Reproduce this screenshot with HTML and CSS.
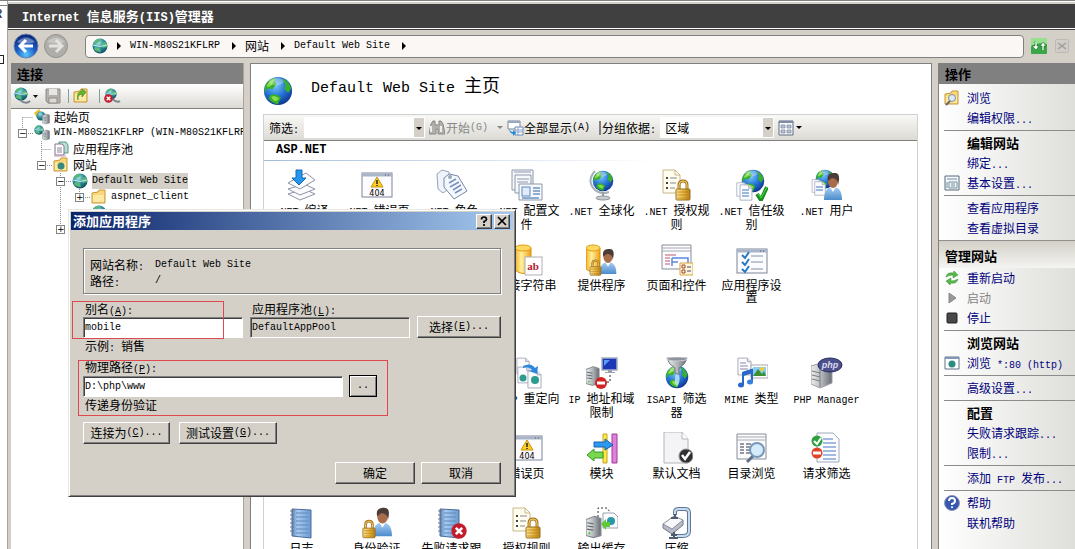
FILE: index.html
```html
<!DOCTYPE html>
<html lang="zh-CN">
<head>
<meta charset="utf-8">
<title>Internet 信息服务(IIS)管理器</title>
<link rel="stylesheet" href="styles.css">
</head>
<body>
<svg class="sprite" aria-hidden="true">
  <defs>
    <radialGradient id="sea" cx=".4" cy=".3" r=".75"><stop offset="0" stop-color="#7cc8f8"/><stop offset=".5" stop-color="#2878d8"/><stop offset="1" stop-color="#0c2f8c"/></radialGradient>
    <radialGradient id="teal" cx=".4" cy=".3" r=".75"><stop offset="0" stop-color="#a8e4e8"/><stop offset=".5" stop-color="#2c8a9c"/><stop offset="1" stop-color="#0c4c60"/></radialGradient>
    <linearGradient id="gold"><stop offset="0" stop-color="#fce49c"/><stop offset=".5" stop-color="#eab83c"/><stop offset="1" stop-color="#b8801c"/></linearGradient>
    <linearGradient id="cyl"><stop offset="0" stop-color="#f8b020"/><stop offset=".4" stop-color="#fff0a0"/><stop offset="1" stop-color="#f0a010"/></linearGradient>
    <linearGradient id="steel"><stop offset="0" stop-color="#f0f0f0"/><stop offset=".5" stop-color="#b4b8bc"/><stop offset="1" stop-color="#686c74"/></linearGradient>
    <linearGradient id="shirt" x2="0" y2="1"><stop offset="0" stop-color="#a8d0f4"/><stop offset="1" stop-color="#4c8ccc"/></linearGradient>
    <linearGradient id="book"><stop offset="0" stop-color="#5c84b8"/><stop offset=".3" stop-color="#a8ccf0"/><stop offset="1" stop-color="#6898d0"/></linearGradient>
    <radialGradient id="ball" cx=".5" cy=".85" r=".8"><stop offset="0" stop-color="#58c8ff"/><stop offset=".5" stop-color="#1c5cc8"/><stop offset="1" stop-color="#0c2878"/></radialGradient>
  </defs>
</svg>
<svg class="symbols" aria-hidden="true">
  <symbol id="globe" viewBox="0 0 32 32"><circle cx="16" cy="16" r="15" fill="url(#sea)"/><path d="M3 9Q7 2 14 2L12 6 15 8 10 14 5 13 2 18Q1 13 3 9M20 3Q28 5 30 13L27 18 23 14 24 9M8 20Q14 18 19 23L16 30Q9 29 6 24Z" fill="#38b028"/><path d="M4 10Q8 4 13 3L9 10 5 12M9 22Q13 20 17 24L14 27Q10 26 9 22" fill="#88dc50"/><ellipse cx="14" cy="6" rx="8" ry="4" fill="#fff" opacity=".3"/></symbol>
  <symbol id="globe-s" viewBox="0 0 16 16"><circle cx="8" cy="8" r="7.5" fill="url(#teal)"/><path d="M2 4Q5 0 9 1L7 4 3 6M9 5L14 4 15 9 11 10M3 9L8 10 9 14Q4 14 2 11Z" fill="#58b878"/><path d="M1 7Q8 10 15 7" stroke="#bde8ee" fill="none"/></symbol>
  <symbol id="page" viewBox="0 0 16 20"><path d="M1 1H11L15 5V19H1Z" fill="#fcfcff" stroke="#a4a8b8"/><path d="M11 1V5H15" fill="#dde" stroke="#a4a8b8"/></symbol>
  <symbol id="lock" viewBox="0 0 16 22"><path d="M4 12V6Q4 2 8 2T12 6V12" fill="none" stroke="#a87820" stroke-width="3"/><path d="M4 12V6Q4 2 8 2T12 6V12" fill="none" stroke="#f0d070"/><rect x="1" y="10" width="14" height="11" rx="1" fill="url(#gold)" stroke="#98701c"/><path d="M2 13H14M2 16H14M2 19H14" stroke="#a87418" opacity=".6"/></symbol>
  <symbol id="man" viewBox="0 0 20 28"><path d="M1 27Q1 14 10 14T19 27Z" fill="url(#shirt)"/><path d="M7 14L10 19 13 14" fill="#fff"/><ellipse cx="10" cy="8" rx="5" ry="7" fill="#a86c48"/><path d="M5 8Q3 1 10 0T16 7L15 13Q16 6 9 5Z" fill="#4c3c38"/></symbol>
  <symbol id="server" viewBox="0 0 16 22"><path d="M1 4L9 1 15 3V19L8 21 1 19Z" fill="url(#steel)" stroke="#80848c"/><path d="M2 7L8 8M2 10L8 11M2 13L8 14" stroke="#606468"/><circle cx="4" cy="17" r="1" fill="#4c4"/></symbol>
  <symbol id="win" viewBox="0 0 32 26"><rect x="1" y="1" width="30" height="24" fill="#fcfcff" stroke="#7c8498"/><path d="M1 3H31" stroke="#aab4c8" stroke-width="3"/><path d="M24 3H25M27 3H28" stroke="#556"/></symbol>
  <symbol id="folder" viewBox="0 0 16 16"><path d="M1 4L7 3 8 1H14V14H1Z" fill="#f8d878" stroke="#c89838"/><path d="M2 6H13V13H2Z" fill="#fce9a4"/></symbol>
  <symbol id="err" viewBox="0 0 10 10"><circle cx="5" cy="5" r="4.8" fill="#c41c2c"/><path d="M3 3L7 7M7 3L3 7" stroke="#fff" stroke-width="1.6"/></symbol>

  <symbol id="i-compile" viewBox="0 0 32 32"><g fill="#fcfcff" stroke="#8c94a8"><path d="M2 25L18 20 29 25 14 31Z"/><path d="M2 20L18 15 29 20 14 26Z"/><path d="M2 14L20 4 29 11 14 20Z"/></g><path d="M10 1H16V9H20L13 16 6 9H10Z" fill="#2498ec" stroke="#1468b8"/></symbol>
  <symbol id="i-404" viewBox="0 0 32 32"><use href="#win" x="0" y="3" width="32" height="26"/><path d="M16 8L22 18H10Z" fill="#fcd020" stroke="#c89410"/><path d="M16 11V15M16 16V17" stroke="#222" stroke-width="1.5"/><text x="16" y="27" text-anchor="middle" class="i404">404</text></symbol>
  <symbol id="i-role" viewBox="0 0 32 32"><path d="M1 5L6 1 13 3 15 18 7 24 2 20Z" fill="#f0f4fc" stroke="#98a4b8"/><path d="M8 9L13 5 22 7 31 22 18 30 8 18Z" fill="#f4f8ff" stroke="#7888a4"/><path d="M13 14L20 10M14 18L23 13M17 21L25 16M19 24L26 20" stroke="#7890b8" stroke-width="1.5"/><circle cx="14" cy="8" r="2" fill="#9ab"/></symbol>
  <symbol id="i-config" viewBox="0 0 32 32"><g fill="#f6f8fc" stroke="#8c98ac"><path d="M1 1H22V21H1Z"/><path d="M4 6H20V24H4Z"/><path d="M8 15H31V31H8Z"/></g><path d="M3 3H20M6 10H18M6 13H17" stroke="#8c98ac"/><rect x="11" y="18" width="8" height="9" fill="#dfeafa" stroke="#5c88bc"/><path d="M22 19H29M22 22H29M22 25H29M11 29H28" stroke="#8cacd0" stroke-width="2"/></symbol>
  <symbol id="i-world" viewBox="0 0 32 32"><path d="M9 2Q0 12 9 21Q15 26 23 23" fill="none" stroke="#a8b0b8" stroke-width="2"/><use href="#globe" x="6" y="1" width="22" height="22"/><path d="M17 23V28" stroke="#98a0a8" stroke-width="2"/><ellipse cx="17" cy="29" rx="7" ry="2" fill="#c8ccd0" stroke="#909498"/></symbol>
  <symbol id="i-auth" viewBox="0 0 32 32"><path d="M2 1H14L19 6V24H2Z" fill="#fffcf0" stroke="#c8b888"/><path d="M14 1V6H19" fill="none" stroke="#c8b888"/><path d="M5 9H7M5 14H7M5 19H7" stroke="#444" stroke-width="2"/><path d="M9 9H16M9 14H15M9 19H14" stroke="#888"/><use href="#lock" x="14" y="10" width="16" height="22"/></symbol>
  <symbol id="i-trust" viewBox="0 0 32 32"><use href="#globe" x="5" y="0" width="24" height="24"/><use href="#page" x="0" y="13" width="12" height="15"/><use href="#page" x="3" y="15" width="14" height="17"/><path d="M6 21H13M6 24H13M6 27H13" stroke="#3878c0"/><path d="M21 25L25 31 31 18" fill="none" stroke="#189020" stroke-width="4"/><path d="M22 25L25 29 31 18" fill="none" stroke="#50d848"/></symbol>
  <symbol id="i-users" viewBox="0 0 32 32"><use href="#globe" x="4" y="0" width="20" height="20"/><use href="#page" x="0" y="10" width="12" height="14"/><use href="#page" x="3" y="12" width="12" height="15"/><path d="M5 18H12M5 21H12" stroke="#3878c0"/><use href="#man" x="12" y="4" width="20" height="28"/></symbol>
  <symbol id="i-conn" viewBox="0 0 32 32"><path d="M4 4V26Q12 33 20 26V4Z" fill="url(#cyl)" stroke="#d89410"/><ellipse cx="12" cy="4" rx="8" ry="3" fill="#ffd860" stroke="#e09c18"/><rect x="14" y="13" width="17" height="18" fill="#fff" stroke="#b0b0b8"/><text x="22" y="26" text-anchor="middle" class="iab">ab</text></symbol>
  <symbol id="i-provider" viewBox="0 0 32 32"><path d="M0 4V25Q7 31 14 25V4Z" fill="url(#cyl)" stroke="#d89410"/><ellipse cx="7" cy="4" rx="7" ry="3" fill="#ffd860" stroke="#e09c18"/><use href="#man" x="12" y="5" width="20" height="26"/><use href="#lock" x="3" y="15" width="13" height="17"/></symbol>
  <symbol id="i-controls" viewBox="0 0 32 32"><path d="M1 1H30V25H1Z" fill="#fcfcff" stroke="#888c98"/><path d="M1 4H30M1 7H30" stroke="#a4a8b0"/><path d="M4 11H15M4 14H9M4 17H9M4 20H9" stroke="#c05870"/><path d="M11 14H27V21M11 14V22M11 18H17" stroke="#5888e0" stroke-width="1.5" fill="none"/><path d="M19 19H32V31H19Z" fill="#fff8d8" stroke="#d8a440"/><path d="M21 21H24V24H21ZM21 26H24V29H21Z" fill="none" stroke="#a04030"/><path d="M26 23H30M26 27H30" stroke="#447"/></symbol>
  <symbol id="i-appset" viewBox="0 0 32 32"><use href="#win" x="0" y="4" width="32" height="26"/><path d="M6 11L9 14 13 8M6 18L9 21 13 15M6 25L9 28 13 22" fill="none" stroke="#2878c0" stroke-width="2"/><path d="M15 12H27M15 18H27M15 25H27" stroke="#8090a4"/></symbol>
  <symbol id="i-redirect" viewBox="0 0 32 32"><use href="#page" x="5" y="0" width="14" height="18"/><use href="#page" x="6" y="9" width="14" height="18"/><circle cx="12" cy="21" r="3.5" fill="#2c9c90"/><use href="#page" x="16" y="13" width="15" height="19"/><circle cx="24" cy="23" r="4" fill="#2c9c90"/><path d="M12 9Q20 5 24 11L27 9 26 17 18 14 21 13Q18 9 12 11Z" fill="#2c88dc"/></symbol>
  <symbol id="i-ip" viewBox="0 0 32 32"><use href="#server" x="-1" y="8" width="15" height="22"/><rect x="16" y="1" width="15" height="12" fill="#1838b8" stroke="#a8b0c0" stroke-width="1.5"/><path d="M18 3H24L18 9Z" fill="#5c9cf8"/><path d="M22 13H26V15H29V16H19V15H22Z" fill="#98a0b0"/><path d="M24 18V25H20" stroke="#222" stroke-dasharray="2" fill="none"/><circle cx="15" cy="26" r="6" fill="#d02424"/><path d="M11 26H19" stroke="#fff" stroke-width="3"/></symbol>
  <symbol id="i-isapi" viewBox="0 0 32 32"><use href="#globe" x="4" y="8" width="24" height="24"/><path d="M6 1H26Q25 7 18 11V18L14 16V11Q7 7 6 1Z" fill="url(#steel)" stroke="#707880"/><ellipse cx="16" cy="2" rx="10" ry="2" fill="#8c949c" stroke="#c8ccd0"/><path d="M15 17Q12 24 16 30Q20 24 18 18Z" fill="#c4e8ff" opacity=".8"/></symbol>
  <symbol id="i-mime" viewBox="0 0 32 32"><use href="#page" x="1" y="0" width="15" height="19"/><path d="M4 6H10M4 9H12M4 12H12" stroke="#88a"/><rect x="15" y="8" width="17" height="13" fill="#fff" stroke="#a8a8b0"/><path d="M17 10H30V19H17Z" fill="#88ccf0"/><path d="M17 19L22 12 26 17 28 14 30 19Z" fill="#3c9030"/><circle cx="26" cy="12" r="2" fill="#f8cc20"/><path d="M7 28V16L16 13V25" fill="none" stroke="#2868c8" stroke-width="2"/><path d="M7 17L16 14" stroke="#2868c8" stroke-width="4"/><ellipse cx="5" cy="28" rx="3" ry="2.5" fill="#2868c8"/><ellipse cx="14" cy="25" rx="3" ry="2.5" fill="#3880e0"/></symbol>
  <symbol id="i-php" viewBox="0 0 32 32"><path d="M0 9L13 5 21 8V26L9 31 0 27Z" fill="url(#steel)" stroke="#a0a0a4"/><path d="M1 14L9 16M1 18L9 20M1 22L9 24M9 12V30" stroke="#787c80"/><ellipse cx="19" cy="8" rx="12" ry="7" fill="#4c508c" stroke="#282c5c"/><text x="19" y="11" text-anchor="middle" class="iphp">php</text></symbol>
  <symbol id="i-module" viewBox="0 0 32 32"><path d="M17 2H21V31H17Z" fill="#fcec40" stroke="#c8a020"/><path d="M26 2H31V31H26Z" fill="#e080dc" stroke="#9c3c98"/><path d="M8 10H19V7L27 13 19 18V15H8Z" fill="#2c98f0" stroke="#1860b0"/><path d="M17 20H8V17L1 23 8 29V26H17Z" fill="#78d850" stroke="#389828"/></symbol>
  <symbol id="i-doc" viewBox="0 0 32 32"><path d="M3 0H21L27 7V31H3Z" fill="#f4f4f6" stroke="#b4b4bc"/><path d="M21 0V7H27" fill="#fff" stroke="#b4b4bc"/><circle cx="25" cy="24" r="7" fill="#303034" stroke="#909094"/><path d="M21 23L24 27 29 20" fill="none" stroke="#fff" stroke-width="2.5"/></symbol>
  <symbol id="i-browse" viewBox="0 0 32 32"><path d="M1 2H30V27H1Z" fill="#fcfcff" stroke="#888c98"/><path d="M1 5H30M1 8H30" stroke="#a4a8b0"/><path d="M4 12H8M4 15H8M4 18H8M4 21H8M10 12H15M10 15H14M10 18H14M10 21H15" stroke="#334"/><path d="M17 24L11 30" stroke="#607080" stroke-width="3"/><circle cx="21" cy="18" r="7" fill="#cce8fc" fill-opacity=".85" stroke="#7898b8" stroke-width="2"/></symbol>
  <symbol id="i-filter" viewBox="0 0 32 32"><path d="M6 1H22L28 7V30H6Z" fill="#fcfcff" stroke="#a0a8b8"/><path d="M12 7H22M12 11H25M12 15H25M12 19H25M12 23H25M12 27H25" stroke="#4878c0"/><circle cx="6" cy="9" r="5.5" fill="#30a040"/><path d="M3 9L6 12 10 6" fill="none" stroke="#fff" stroke-width="2"/><circle cx="6" cy="21" r="5.5" fill="#e04428"/><path d="M2 21H10" stroke="#fff" stroke-width="3"/></symbol>
  <symbol id="i-log" viewBox="0 0 32 32"><path d="M6 2L25 3V31L6 29Z" fill="url(#book)" stroke="#4c6c98"/><path d="M10 6H22M10 10H22M10 14H22M10 18H22M10 22H22M10 26H22" stroke="#6088b8"/><path d="M4 4H8M4 8H8M4 12H8M4 16H8M4 20H8M4 24H8" stroke="#707888"/></symbol>
  <symbol id="i-ident" viewBox="0 0 32 32"><use href="#man" x="11" y="0" width="21" height="31"/><use href="#lock" x="1" y="12" width="14" height="20"/></symbol>
  <symbol id="i-fail" viewBox="0 0 32 32"><use href="#i-log" x="-2" y="0" width="32" height="32"/><use href="#err" x="15" y="16" width="16" height="16"/></symbol>
  <symbol id="i-cache" viewBox="0 0 32 32"><use href="#server" x="-1" y="8" width="17" height="24"/><path d="M12 10V1H21L24 5V12" fill="#fff" stroke="#333" stroke-dasharray="2"/><path d="M17 6H28L32 10V21H17Z" fill="#fcfcff" stroke="#98a0b0"/><circle cx="25" cy="14" r="4" fill="#2898a8"/><path d="M15 17L20 12V15H24V20H20V23Z" fill="#60c838"/></symbol>
  <symbol id="i-zip" viewBox="0 0 32 32"><path d="M14 8V5Q14 2 18 2H24Q28 2 28 6V24Q28 29 22 29H16" fill="none" stroke="#607898" stroke-width="4"/><path d="M14 8V5Q14 2 18 2H24Q28 2 28 6V24Q28 29 22 29H16" fill="none" stroke="#c8dcf0" stroke-width="2"/><path d="M2 17V21L11 27 22 18V13Z" fill="#b8bcc8" stroke="#707884"/><path d="M2 17L13 9 22 13 11 22Z" fill="#f8f8fc" stroke="#88909c"/><path d="M10 11H17M14 7V11M13 25V31M8 31H17M10 28H16" stroke="#505c70" stroke-width="2"/></symbol>
</svg>

<div class="desktop">
  <aside class="behind"><span class="m">R</span><i></i></aside>
  <div class="window">
    <header class="caption"><h1><span class="m">Internet </span>信息服务<span class="m">(IIS)</span>管理器</h1></header>
    <nav class="navbar">
      <button class="plain" aria-label="后退"><svg width="26" height="26" viewBox="0 0 26 26"><circle cx="13" cy="13" r="12" fill="url(#ball)" stroke="#6c84b0"/><path d="M4 9Q13 0 22 9Q13 12 4 9" fill="#fff" opacity=".35"/><path d="M13 7L7 13 13 19M8 13H20" fill="none" stroke="#fff" stroke-width="3"/></svg></button>
      <button class="plain fwd" aria-label="前进"><svg width="26" height="26" viewBox="0 0 26 26"><circle cx="13" cy="13" r="11.500" fill="#b0aeaa" stroke="#94928e"/><path d="M4 9Q13 0 22 9Q13 12 4 9" fill="#fff" opacity=".3"/><path d="M13 7L19 13 13 19M18 13H6" fill="none" stroke="#e4e2de" stroke-width="3"/></svg></button>
      <div class="address">
        <svg width="16" height="16"><use href="#globe-s"/></svg>
        <i class="tri"></i><span class="m">WIN-M80S21KFLRP</span>
        <i class="tri"></i><span>网站</span>
        <i class="tri"></i><span class="m">Default Web Site</span>
        <i class="tri"></i>
      </div>
      <button class="plain" aria-label="刷新"><svg width="16" height="16" viewBox="0 0 16 16"><rect width="16" height="16" rx="1" fill="#38a848"/><path d="M0 0H16V6Q8 3 0 8Z" fill="#98e090"/><path d="M4 3V8H1L5 12 8 8H6V6M11 13V8H9L12 4 15 8H13V11" fill="#fff" stroke="#186820" stroke-width=".6"/></svg></button>
      <button class="plain" aria-label="停止" disabled><svg width="14" height="14" viewBox="0 0 14 14"><rect x=".5" y=".5" width="13" height="13" rx="1" fill="#d0ccc8" stroke="#bcb8b4"/><path d="M3 4L11 10M11 4L3 10" stroke="#a09c98" stroke-width="1.500"/></svg></button>
    </nav>

    <div class="panes">
      <section class="pane connections">
        <h2>连接</h2>
        <div class="toolbar">
          <button class="plain" aria-label="连接"><svg width="24" height="18" viewBox="0 0 24 18"><use href="#globe-s" x="0" y="0" width="14" height="14"/><path d="M6 13Q12 18 16 14" fill="none" stroke="#7c8890" stroke-width="2"/><path d="M19 8H24L21.500 11Z" fill="#111"/></svg></button>
          <button class="plain" aria-label="保存" disabled><svg width="16" height="16" viewBox="0 0 16 16"><path d="M1 1H15V15H3L1 13Z" fill="#b4b0ac" stroke="#908c88"/><rect x="4" y="1" width="8" height="6" fill="#e8e6e2"/><rect x="4" y="10" width="8" height="5" fill="#dcdad6" stroke="#908c88"/></svg></button>
          <i class="bar"></i>
          <button class="plain" aria-label="上移"><svg width="16" height="16" viewBox="0 0 16 16"><use href="#folder"/><path d="M5 12Q4 7 9 6V9L13 4 9 1V3Q3 4 5 12" fill="#60b830" stroke="#38801c" stroke-width=".6"/></svg></button>
          <i class="bar"></i>
          <button class="plain" aria-label="断开"><svg width="17" height="16" viewBox="0 0 17 16"><use href="#globe-s" x="1" y="0" width="12" height="12"/><path d="M8 11Q13 15 16 13" stroke="#7c8890" stroke-width="2" fill="none"/><use href="#err" x="0" y="6" width="9" height="9"/></svg></button>
        </div>
        <div class="tree">
          <svg class="lines" width="90" height="126"><path d="M11.500 8V24M11.500 8.500H22M17 24.500H22M30.500 32V56M30.500 40.500H40M36 56.500H41M49.500 64V126M55 72.500H60M68.500 80V92M74 88.500H80" fill="none" stroke="#909090" stroke-dasharray="1"/></svg>
          <div class="node l0"><i></i><svg width="16" height="16" viewBox="0 0 16 16"><path d="M0 4L5 0 9 6 3 9Z" fill="#e8c030"/><circle cx="7" cy="7" r="4.500" fill="url(#teal)"/><use href="#server" x="8" y="4" width="8" height="12"/></svg><span>起始页</span></div>
          <div class="node l0"><button class="exp" aria-label="折叠">−</button><svg width="16" height="16" viewBox="0 0 16 16"><use href="#globe-s" x="0" y="0" width="10" height="10"/><use href="#server" x="8" y="4" width="8" height="12"/></svg><span class="m">WIN-M80S21KFLRP (WIN-M80S21KFLRP</span></div>
          <div class="node l1"><i></i><svg width="16" height="16" viewBox="0 0 16 16"><path d="M6 1L13 1 15 4V12H6Z" fill="#b8e0d0" stroke="#4c9c88"/><path d="M2 3H9L11 5V14H2Z" fill="#fff" stroke="#8c6c90"/><path d="M4 7H9M4 9H9M4 11H9" stroke="#889"/><path d="M1 15H13" stroke="#c49cac"/></svg><span>应用程序池</span></div>
          <div class="node l1"><button class="exp" aria-label="折叠">−</button><svg width="16" height="16" viewBox="0 0 16 16"><use href="#folder"/><circle cx="8" cy="9" r="3.500" fill="#38887c"/></svg><span>网站</span></div>
          <div class="node l2"><button class="exp" aria-label="折叠">−</button><svg width="16" height="16"><use href="#globe-s"/></svg><span class="m selected">Default Web Site</span></div>
          <div class="node l3"><button class="exp" aria-label="展开">+</button><svg width="16" height="16"><use href="#folder"/></svg><span class="m">aspnet_client</span></div>
          <div class="node l3"><i></i><svg width="16" height="16"><use href="#globe-s"/></svg></div>
          <div class="node l2"><button class="exp" aria-label="展开">+</button></div>
        </div>
      </section>

      <main class="pane home">
        <div class="title"><svg width="30" height="30"><use href="#globe"/></svg><h2><span class="m">Default Web Site </span>主页</h2></div>
        <div class="features">
          <form class="filterbar">
            <label for="filter">筛选<span class="m">:</span></label>
            <span class="combo wide"><select id="filter"><option></option></select></span>
            <button type="button" class="plain go" disabled><svg width="16" height="16" viewBox="0 0 16 16"><path d="M2 4L4 1H6V5H10V1H12L14 4 16 14H9V9H7V14H0Z" fill="#b0b0ac" stroke="#888"/><path d="M2 6V12M12 6V12" stroke="#eee" stroke-width="2"/></svg>开始<span class="m">(G)</span><i class="down"></i></button>
            <button type="button" class="plain"><svg width="17" height="16" viewBox="0 0 17 16"><path d="M1 1H13V9H1Z" fill="#fff" stroke="#7c889c"/><path d="M1 2H13" stroke="#98a8c0" stroke-width="2"/><path d="M8 7H16V15H8Z" fill="#fff" stroke="#6888b8"/><path d="M8 10H16M11 7V15M8 12H16" stroke="#88a4cc"/><path d="M2 8Q3 12 6 12V10L9 13 6 16V14Q2 13 2 8" fill="#2888d8"/></svg>全部显示<span class="m">(A)</span></button>
            <i class="bar"></i>
            <label for="group">分组依据<span class="m">:</span></label>
            <span class="combo"><select id="group"><option>区域</option></select></span>
            <button type="button" class="plain view" aria-label="视图"><svg width="16" height="16" viewBox="0 0 16 16"><path d="M1 1H15V15H1Z" fill="#fcfcff" stroke="#5c6880"/><path d="M1 2H15" stroke="#7c8ca8" stroke-width="2"/><path d="M3 5H7V8H3ZM9 5H13V8H9ZM3 10H7V13H3ZM9 10H13V13H9Z" fill="#b8c4d8" stroke="#788498" stroke-width=".7"/></svg><i class="down"></i></button>
          </form>
          <h3 class="m">ASP.NET</h3>
          <ul class="icons">
            <li><svg><use href="#i-compile"/></svg><span><span class="m">.NET </span>编译</span></li>
            <li><svg><use href="#i-404"/></svg><span><span class="m">.NET </span>错误页</span></li>
            <li><svg><use href="#i-role"/></svg><span><span class="m">.NET </span>角色</span></li>
            <li><svg><use href="#i-config"/></svg><span><span class="m">.NET </span>配置文件</span></li>
            <li><svg><use href="#i-world"/></svg><span><span class="m">.NET </span>全球化</span></li>
            <li><svg><use href="#i-auth"/></svg><span><span class="m">.NET </span>授权规则</span></li>
            <li><svg><use href="#i-trust"/></svg><span><span class="m">.NET </span>信任级别</span></li>
            <li><svg><use href="#i-users"/></svg><span><span class="m">.NET </span>用户</span></li>
            <li class="from4"><svg><use href="#i-conn"/></svg><span>连接字符串</span></li>
            <li><svg><use href="#i-provider"/></svg><span>提供程序</span></li>
            <li><svg><use href="#i-controls"/></svg><span>页面和控件</span></li>
            <li><svg><use href="#i-appset"/></svg><span>应用程序设置</span></li>
          </ul>
          <ul class="icons second">
            <li class="from4"><svg><use href="#i-redirect"/></svg><span><span class="m">HTTP </span>重定向</span></li>
            <li><svg><use href="#i-ip"/></svg><span><span class="m">IP </span>地址和域限制</span></li>
            <li><svg><use href="#i-isapi"/></svg><span><span class="m">ISAPI </span>筛选器</span></li>
            <li><svg><use href="#i-mime"/></svg><span><span class="m">MIME </span>类型</span></li>
            <li><svg><use href="#i-php"/></svg><span><span class="m">PHP Manager</span></span></li>
            <li class="from4"><svg><use href="#i-404"/></svg><span>错误页</span></li>
            <li><svg><use href="#i-module"/></svg><span>模块</span></li>
            <li><svg><use href="#i-doc"/></svg><span>默认文档</span></li>
            <li><svg><use href="#i-browse"/></svg><span>目录浏览</span></li>
            <li><svg><use href="#i-filter"/></svg><span>请求筛选</span></li>
            <li class="from1"><svg><use href="#i-log"/></svg><span>日志</span></li>
            <li><svg><use href="#i-ident"/></svg><span>身份验证</span></li>
            <li><svg><use href="#i-fail"/></svg><span>失败请求跟</span></li>
            <li><svg><use href="#i-auth"/></svg><span>授权规则</span></li>
            <li><svg><use href="#i-cache"/></svg><span>输出缓存</span></li>
            <li><svg><use href="#i-zip"/></svg><span>压缩</span></li>
          </ul>
        </div>
      </main>

      <aside class="actions">
        <h2>操作</h2>
        <div class="group">
          <div class="act"><svg viewBox="0 0 16 16"><use href="#folder"/><circle cx="8" cy="8" r="3.500" fill="#d8ecf4" stroke="#889"/><path d="M6 11L2 15" stroke="#667" stroke-width="2"/></svg><a href="#">浏览</a></div>
          <div class="act"><a href="#">编辑权限<span class="m">...</span></a></div>
          <hr>
          <h4>编辑网站</h4>
          <div class="act"><a href="#">绑定<span class="m">...</span></a></div>
          <div class="act"><svg viewBox="0 0 16 16"><path d="M1 1H15V15H1Z" fill="#f4f8fc" stroke="#58687c"/><path d="M3 4H13M5 7H13V13H5ZM7 9H11M7 11H11M3 7V13" fill="none" stroke="#709098"/></svg><a href="#">基本设置<span class="m">...</span></a></div>
          <hr>
          <div class="act"><a href="#">查看应用程序</a></div>
          <div class="act"><a href="#">查看虚拟目录</a></div>
        </div>
        <h3>管理网站</h3>
        <div class="group rest">
          <div class="act"><svg viewBox="0 0 16 16"><path d="M2 7Q3 2 9 3L10 1 14 5 9 8V5Q5 5 2 7M14 9Q13 14 7 13L6 15 2 11 7 8V11Q11 11 14 9" fill="#58b848" stroke="#38903c" stroke-width=".5"/></svg><a href="#">重新启动</a></div>
          <div class="act off"><svg viewBox="0 0 16 16"><path d="M5 3L12 8 5 13Z" fill="#989898" stroke="#888"/></svg><span>启动</span></div>
          <div class="act"><svg viewBox="0 0 16 16"><rect x="3" y="3" width="10" height="10" rx="1" fill="#484848" stroke="#222"/></svg><a href="#">停止</a></div>
          <hr>
          <h4>浏览网站</h4>
          <div class="act"><svg viewBox="0 0 16 16"><path d="M1 2H15V14H1Z" fill="#fff" stroke="#607088"/><path d="M1 3H15" stroke="#8098b8" stroke-width="2"/><circle cx="8" cy="9" r="3.500" fill="#2c8c80"/></svg><a href="#">浏览<span class="m"> *:80 (http)</span></a></div>
          <hr>
          <div class="act"><a href="#">高级设置<span class="m">...</span></a></div>
          <hr>
          <h4>配置</h4>
          <div class="act"><a href="#">失败请求跟踪<span class="m">...</span></a></div>
          <div class="act"><a href="#">限制<span class="m">...</span></a></div>
          <hr>
          <div class="act"><a href="#">添加<span class="m"> FTP </span>发布<span class="m">...</span></a></div>
          <hr>
          <div class="act"><svg viewBox="0 0 16 16"><circle cx="8" cy="8" r="7.500" fill="#3858b0" stroke="#8c98b8"/><path d="M5 6Q5 3 8 3T11 6Q11 8 8 9V10M8 11.500V13" fill="none" stroke="#fff" stroke-width="2"/></svg><a href="#">帮助</a></div>
          <div class="act"><a href="#">联机帮助</a></div>
        </div>
      </aside>
    </div>
  </div>
</div>

<form class="dialog" role="dialog" aria-labelledby="dlg">
  <div class="dlg-title"><h2 id="dlg">添加应用程序</h2>
    <button type="button" class="btn cap" aria-label="帮助"><svg width="10" height="10" viewBox="0 0 10 10"><path d="M2.500 3.500Q2.500 1 5 1T7.500 3.500Q7.500 4.500 5 5.500V7M5 8V10" fill="none" stroke="#000" stroke-width="1.700"/></svg></button>
    <button type="button" class="btn cap" aria-label="关闭"><svg width="10" height="10" viewBox="0 0 10 10"><path d="M1 1L9 9M9 1L1 9" stroke="#000" stroke-width="1.700"/></svg></button>
  </div>
  <div class="dlg-body">
    <dl class="etched"><dt>网站名称<span class="m">:</span></dt><dd class="m">Default Web Site</dd><dt>路径<span class="m">:</span></dt><dd class="m">/</dd></dl>
    <div class="fields">
      <div class="field"><label for="alias">别名<span class="m">(<u>A</u>):</span></label><input id="alias" type="text" value="mobile"></div>
      <div class="field"><label for="pool">应用程序池<span class="m">(<u>L</u>):</span></label><input id="pool" class="ro" type="text" value="DefaultAppPool" readonly></div>
      <button type="button" class="btn pick">选择<span class="m">(<u>E</u>)...</span></button>
      <i class="mark one"></i>
    </div>
    <p>示例<span class="m">: </span>销售</p>
    <div class="path">
      <label for="path">物理路径<span class="m">(<u>P</u>):</span></label>
      <div class="path-row"><input id="path" type="text" value="D:\php\www"><button type="button" class="btn default m">..</button></div>
      <p>传递身份验证</p>
      <i class="mark two"></i>
    </div>
    <div class="row"><button type="button" class="btn">连接为<span class="m">(<u>C</u>)...</span></button><button type="button" class="btn test">测试设置<span class="m">(<u>G</u>)...</span></button></div>
    <div class="row end"><button type="submit" class="btn">确定</button><button type="button" class="btn">取消</button></div>
  </div>
</form>
</body>
</html>
```
FILE: styles.css
```css
* { box-sizing: border-box; }
html, body { height: 100%; }
body {
  margin: 0;
  overflow: hidden;
  position: relative;
  background: #d4d0c8;
  color: #000;
  font: 12px/16px "Noto Sans CJK SC", sans-serif;
}
h1, h2, h3, h4, p, ul, dl, dd { margin: 0; padding: 0; }
ul { list-style: none; }
button, input, select { font: inherit; color: inherit; }
svg { flex: none; display: block; }
.sprite { position: absolute; width: 0; height: 0; }
.symbols { display: none; }
.m { font-family: "Liberation Mono", monospace; font-size: 10px; line-height: 10px; white-space: pre; }
.plain { display: flex; align-items: center; border: 0; padding: 0; background: none; }

.i404 { font: 8px "DejaVu Sans", sans-serif; }
.iab { font: bold 11px "Liberation Serif", serif; fill: #b02030; }
.iphp { font: italic bold 9px "Liberation Sans", sans-serif; fill: #dde; }

.desktop { display: flex; height: 100%; border-top: 1px solid #808080; }
.behind {
  width: 8px;
  padding-top: 4px;
  overflow: hidden;
  background: #fff;
  border-right: 1px solid #a8a49c;
}
.behind .m { display: block; padding-top: 3px; font-size: 12px; line-height: 12px; text-indent: -5px; border-top: 1px solid #808080; }
.behind i { display: block; width: 4px; height: 9px; margin-top: 34px; border: 1px solid #222; border-left: 0; }
.window {
  flex: 1;
  min-width: 0;
  display: flex;
  flex-direction: column;
  border-top: 1px solid #fff;
  padding-top: 2px;
}
.caption { height: 24px; background: #404040; padding: 1px 14px; }
.caption h1 { font-size: 13px; line-height: 22px; color: #fff; }
.caption .m { font-size: 12px; }
.navbar {
  display: flex;
  align-items: center;
  gap: 4px;
  height: 35px;
  padding: 1px 6px 1px 5px;
  border-top: 1px solid #fff;
  box-shadow: inset 0 1px #404040;
}
.address {
  flex: 1;
  display: flex;
  align-items: center;
  gap: 9px;
  height: 23px;
  margin: 0 3px 0 12px;
  padding: 0 6px;
  background: #faf7f5;
  border: 1px solid #808080;
  border-radius: 4px;
}
.navbar > .plain:last-child { margin-left: 4px; }
.tri { border: 4px solid transparent; border-left-color: #000; border-right: 0; }
.address span + .tri { margin-left: 3px; }

.panes { flex: 1; display: flex; gap: 6px; min-height: 0; padding-left: 3px; }
.pane { background: #fff; border-right: 1px solid #808080; overflow: hidden; }
.connections { width: 233px; border-right-color: #a8a49c; }
.connections > h2, .actions > h2 { height: 21px; padding-left: 6px; font-size: 13px; line-height: 21px; background: #808080; }
.toolbar {
  display: flex;
  align-items: center;
  gap: 7px;
  height: 25px;
  padding: 0 3px;
  background: linear-gradient(#fff, #dcdad4);
  border-bottom: 1px solid #808080;
}
.bar { width: 2px; height: 14px; background: #808080; }
.toolbar .bar { margin-right: -3px; background: #80a098; width: 1px; }
.toolbar .bar:nth-of-type(2) { margin-left: 3px; }
.tree { position: relative; overflow: hidden; }
.lines { position: absolute; left: 0; top: 0; }
.node { position: relative; display: flex; align-items: center; height: 16px; white-space: nowrap; }
.node > i, .exp { flex: none; width: 9px; height: 9px; margin: 0 7px; }
.exp { display: grid; place-items: center; padding: 0; border: 1px solid #848484; background: #fff; font: 9px/7px "DejaVu Sans", sans-serif; }
.node span { margin-left: 4px; }
.l1 { padding-left: 19px; }
.l2 { padding-left: 38px; }
.l3 { padding-left: 57px; }
.node .selected { line-height: 16px; background: #d4d0c8; }

.home { flex: 1; min-width: 0; border-top: 1px solid #808080; border-left: 1px solid #808080; padding: 10px 13px 0 12px; }
.title { display: flex; align-items: flex-start; gap: 18px; height: 40px; }
.title svg { margin-top: 2px; }
.title h2 { font-size: 18px; font-weight: 400; line-height: 20px; }
.title .m { font-size: 15px; }
.features { border: 1px solid #d0d0d0; min-height: 460px; }
.filterbar {
  display: flex;
  align-items: center;
  height: 26px;
  padding-left: 5px;
  background: linear-gradient(#f8f8f6, #dcdad4);
  border-bottom: 1px solid #808080;
  white-space: nowrap;
}
.filterbar .go svg, .filterbar .view svg { margin-right: 1px; }
.filterbar .bar { margin: 0 1px 0 9px; }
.combo { position: relative; display: flex; width: 114px; height: 21px; margin: 0 4px; }
.combo.wide { width: 121px; margin-left: 5px; }
.combo select { appearance: none; width: 100%; border: 1px solid #fff; background: #fff; padding: 0 4px; border-radius: 0; }
.combo::before { content: ""; position: absolute; right: 1px; top: 1px; bottom: 1px; width: 10px; background: #d4d0c8; }
.combo::after { content: ""; position: absolute; right: 3px; top: 10px; border: 3px solid transparent; border-top-color: #000; border-bottom: 0; }
.down { border: 3px solid transparent; border-top-color: currentColor; border-bottom: 0; }
.go { color: #888; }
.go .down { margin: 0 4px 0 9px; }
.view .down { margin-left: 1px; }
.features h3 { height: 20px; padding-left: 12px; font-size: 12px; line-height: 18px; border-bottom: 1px solid; border-image: linear-gradient(90deg, #a4bcd8, #fff 60%) 1; }
.icons { display: grid; grid-template-columns: repeat(8, 75px); grid-auto-rows: 75px; padding-top: 8px; }
.icons.second { padding-top: 38px; }
.icons li { display: flex; flex-direction: column; align-items: center; gap: 3px; }
.icons svg { width: 32px; height: 32px; }
.icons li > span { width: 70px; line-height: 12px; text-align: center; word-break: break-all; }
.from4 { grid-column-start: 4; }
.from1 { grid-column-start: 1; }

.actions { width: 137px; overflow: hidden; background: linear-gradient(90deg, #fff, #dededa); border-left: 1px solid #808080; }
.group { padding: 4px 0 2px; }
.group.rest { padding-top: 0; }
.act, .actions h4 { display: flex; align-items: center; height: 20px; padding-left: 28px; white-space: nowrap; }
.act svg { width: 16px; height: 16px; margin: 0 7px 0 -23px; }
.actions h4 { font-size: 13px; }
.act a { color: #00007c; text-decoration: none; }
.off { color: #848484; }
.actions hr { height: 1px; margin: 2px 0 2px 5px; border: 0; background: #8c8c8c; }
.actions h3 { height: 28px; padding-left: 6px; font-size: 13px; line-height: 30px; border-top: 1px solid #909090; background: linear-gradient(#d4d0c8, #f4f4f2); }

.dialog {
  position: absolute;
  left: 68px;
  top: 209px;
  width: 448px;
  padding: 2px;
  background: #d4d0c8;
  border: 1px solid;
  border-color: #e8e6e0 #404040 #404040 #e8e6e0;
  box-shadow: inset 1px 1px #fff, inset -1px -1px #808080;
}
.dlg-title { display: flex; align-items: center; gap: 2px; height: 18px; padding: 0 3px 0 2px; background: linear-gradient(90deg, #0a246a, #a6caf0); }
.dlg-title h2 { flex: 1; font-size: 13px; line-height: 18px; color: #fff; }
.btn {
  display: flex;
  justify-content: center;
  align-items: center;
  height: 22px;
  padding: 0 5px;
  background: #d4d0c8;
  border: 1px solid;
  border-color: #fff #404040 #404040 #fff;
  box-shadow: inset -1px -1px #808080;
  white-space: nowrap;
}
.btn.cap { width: 16px; height: 15px; padding: 0; }
.dlg-body { padding: 18px 12px 10px; }
.etched { display: grid; grid-template-columns: 65px 1fr; grid-auto-rows: 16px; height: 46px; padding: 8px 6px 0; border: 1px solid #808080; box-shadow: 1px 1px #fff, inset 1px 1px #fff; }
.etched dt, .etched dd { line-height: 16px; }
.fields { position: relative; display: flex; align-items: flex-end; gap: 7px; margin-top: 7px; }
.field { width: 160px; }
.dialog label { display: block; height: 16px; padding-left: 2px; }
.dialog p { height: 16px; padding-left: 2px; }
.dialog input {
  display: block;
  width: 100%;
  height: 21px;
  padding: 0 1px;
  background: #fff;
  border: 1px solid;
  border-color: #808080 #fff #fff #808080;
  border-radius: 0;
  box-shadow: inset 1px 1px #404040;
  font: 10px "Liberation Mono", monospace;
}
.dialog input.ro { background: #d4d0c8; }
.pick { width: 84px; margin-left: auto; }
.path { position: relative; margin-top: 5px; }
.path-row { display: flex; align-items: center; gap: 6px; }
.dialog .path-row input { width: 260px; }
.btn.default { width: 28px; border-color: #000; box-shadow: inset 1px 1px #fff, inset -1px -1px #808080; }
.mark { position: absolute; border: 1px solid #e04850; pointer-events: none; }
.one { left: -11px; top: 0; width: 152px; height: 38px; }
.two { left: -5px; top: 1px; width: 310px; height: 56px; }
.row { display: flex; gap: 9px; margin-top: 9px; }
.row .btn { width: 87px; }
.row .btn.test { width: 98px; }
.row.end { justify-content: flex-end; gap: 6px; margin-top: 18px; }
.row.end .btn { width: 80px; }
```
